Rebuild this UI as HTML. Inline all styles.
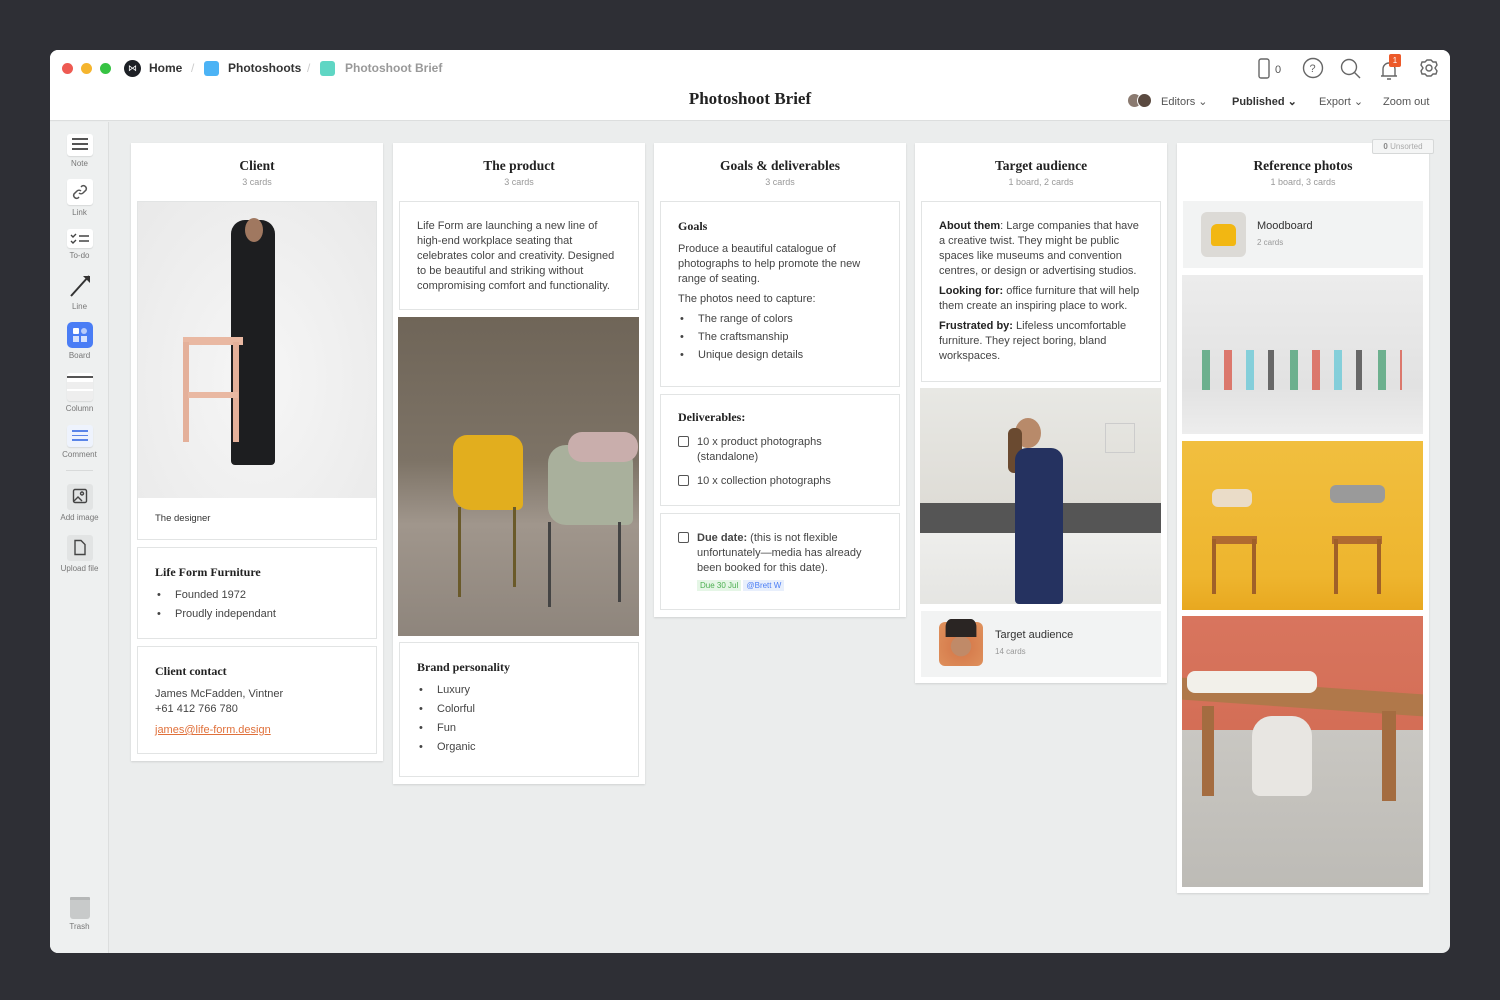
<!DOCTYPE html>
<html><head><meta charset="utf-8"><style>
*{box-sizing:border-box;margin:0;padding:0}
body{width:1500px;height:1000px;background:#2e2f35;font-family:"Liberation Sans",sans-serif;position:relative;overflow:hidden;color:#333}
.win{position:absolute;left:50px;top:50px;width:1400px;height:903px;background:#ebeded;border-radius:8px;overflow:hidden}
.hdr{position:absolute;left:0;top:0;width:1400px;height:71px;background:#fff;border-bottom:1px solid #dcdede}
.side{position:absolute;left:0;top:72px;width:59px;height:831px;background:#eef0f0;border-right:1px solid #dcdede}
.abs{position:absolute}
.dot{position:absolute;top:13px;width:11px;height:11px;border-radius:50%}
.crumb{position:absolute;top:11px;font-size:12px;font-weight:bold;color:#333}
.col{position:absolute;top:93px;width:252px;background:#fff;box-shadow:0 1px 2px rgba(0,0,0,.12)}
.ct{position:absolute;left:0;right:0;top:15px;text-align:center;font-family:"Liberation Serif",serif;font-weight:bold;font-size:13.5px;color:#222}
.cs{position:absolute;left:0;right:0;top:34px;text-align:center;font-size:9px;color:#999}
.card{position:absolute;left:6px;width:240px;background:#fff;border:1px solid #e2e4e4}
.t{font-size:11px;line-height:15px;color:#444}
.h{font-family:"Liberation Serif",serif;font-weight:bold;font-size:12px;color:#222}
.li{position:relative;padding-left:20px;font-size:11px;color:#444}
.li:before{content:"•";position:absolute;left:2px}
.sb{position:absolute;left:0;width:59px;text-align:center;font-size:8px;color:#777}
.ib{width:26px;height:22px;margin:0 auto 3px;background:#fff;border-radius:3px;box-shadow:0 1px 1px rgba(0,0,0,.1)}
.cb{display:inline-block;width:11px;height:11px;border:1px solid #555;border-radius:2px;vertical-align:-2px;margin-right:8px}
</style></head><body>
<div class="win">
 <div class="hdr">
  <div class="dot" style="left:12px;background:#ee5a52"></div>
  <div class="dot" style="left:31px;background:#f5b52e"></div>
  <div class="dot" style="left:50px;background:#37c343"></div>
  <div class="abs" style="left:74px;top:10px;width:17px;height:17px;border-radius:50%;background:#1d2025;color:#fff;font-size:9px;text-align:center;line-height:17px">⋈</div>
  <div class="crumb" style="left:99px">Home</div>
  <div class="crumb" style="left:141px;color:#ccc;font-weight:normal">/</div>
  <div class="abs" style="left:154px;top:11px;width:15px;height:15px;border-radius:3px;background:#4cb3f5"></div>
  <div class="crumb" style="left:178px">Photoshoots</div>
  <div class="crumb" style="left:257px;color:#ccc;font-weight:normal">/</div>
  <div class="abs" style="left:270px;top:11px;width:15px;height:15px;border-radius:3px;background:#5fd6c4"></div>
  <div class="crumb" style="left:295px;color:#999">Photoshoot Brief</div>
  <div class="abs" style="left:0;width:1400px;top:39px;text-align:center;font-family:'Liberation Serif',serif;font-weight:bold;font-size:17px;color:#222">Photoshoot Brief</div>
  <svg class="abs" style="left:1205px;top:7px" width="190" height="24" fill="none" stroke="#666" stroke-width="1.4">
   <rect x="4" y="2" width="10" height="19" rx="2"/><text x="20" y="16" font-size="11" fill="#555" stroke="none" font-family="Liberation Sans">0</text>
   <circle cx="58" cy="11" r="9.5"/><text x="54.5" y="15" font-size="11" fill="#666" stroke="none" font-family="Liberation Sans">?</text>
   <circle cx="94" cy="10" r="7.5"/><line x1="99.5" y1="15.5" x2="105" y2="21"/>
   <path d="M126 19h16M128 19v-7a6 6 0 0 1 12 0v7M132 22h4"/>
   <path d="M170 5l2 -2h4l2 2 3 0 1 3-2 3 2 3-1 3h-3l-2 2h-4l-2-2h-3l-1-3 2-3-2-3 1-3z"/><circle cx="174" cy="11" r="3"/>
  </svg>
  <div class="abs" style="left:1339px;top:4px;width:12px;height:13px;background:#ec5a2a;border-radius:2px;color:#fff;font-size:8px;text-align:center;line-height:13px">1</div>
  <div class="abs" style="left:1077px;top:43px;width:15px;height:15px;border-radius:50%;background:#8a7a70;border:1px solid #fff"></div>
  <div class="abs" style="left:1087px;top:43px;width:15px;height:15px;border-radius:50%;background:#5a4a40;border:1px solid #fff"></div>
  <div class="abs t" style="left:1111px;top:45px;font-size:11px;color:#555">Editors ⌄</div>
  <div class="abs t" style="left:1182px;top:45px;font-size:11px;color:#333;font-weight:bold">Published ⌄</div>
  <div class="abs t" style="left:1269px;top:45px;font-size:11px;color:#555">Export ⌄</div>
  <div class="abs t" style="left:1333px;top:45px;font-size:11px;color:#555">Zoom out</div>
 </div>
 <div class="side">
  <div class="sb" style="top:12px"><div class="ib" style="padding-top:4px"><div style="width:16px;height:2px;background:#555;margin:0 auto 3px"></div><div style="width:16px;height:2px;background:#555;margin:0 auto 3px"></div><div style="width:16px;height:2px;background:#555;margin:0 auto"></div></div>Note</div>
  <div class="sb" style="top:57px"><div class="ib" style="height:26px;padding-top:5px"><svg width="16" height="16" fill="none" stroke="#555" stroke-width="1.5"><path d="M7 9a3 3 0 0 0 4 0l3-3a3 3 0 0 0-4-4l-1 1"/><path d="M9 7a3 3 0 0 0-4 0l-3 3a3 3 0 0 0 4 4l1-1"/></svg></div>Link</div>
  <div class="sb" style="top:107px"><div class="ib" style="height:19px;padding-top:4px"><svg width="20" height="11" fill="none" stroke="#444" stroke-width="1.4"><path d="M1 2l2 2 3-3M1 8l2 2 3-3M9 3h10M9 8h10"/></svg></div>To-do</div>
  <div class="sb" style="top:150px"><svg width="26" height="28"><line x1="4" y1="24" x2="22" y2="4" stroke="#333" stroke-width="2"/><path d="M16 4h7v7z" fill="#333"/></svg><br>Line</div>
  <div class="sb" style="top:200px"><div style="width:26px;height:26px;margin:0 auto 3px;background:#4a7df5;border-radius:5px;position:relative"><div class="abs" style="left:6px;top:6px;width:6px;height:6px;background:#fff;border-radius:1px"></div><div class="abs" style="left:14px;top:6px;width:6px;height:6px;background:#b8cbfa;border-radius:50%"></div><div class="abs" style="left:6px;top:14px;width:6px;height:6px;background:#d7e2fd"></div><div class="abs" style="left:14px;top:14px;width:6px;height:6px;background:#d7e2fd"></div></div>Board</div>
  <div class="sb" style="top:251px"><div class="ib" style="height:28px;background:linear-gradient(#fff 0,#fff 3px,#555 3px,#555 5px,#fff 5px,#fff 9px,#eee 9px,#eee 16px,#fff 16px,#fff 18px,#eee 18px)"></div>Column</div>
  <div class="sb" style="top:303px"><div class="ib" style="background:#eef3fd;padding-top:5px"><div style="width:16px;height:1.5px;background:#5a85e8;margin:0 auto 3px"></div><div style="width:16px;height:1.5px;background:#5a85e8;margin:0 auto 3px"></div><div style="width:16px;height:1.5px;background:#5a85e8;margin:0 auto"></div></div>Comment</div>
  <div class="abs" style="left:16px;top:348px;width:27px;height:1px;background:#d8dada"></div>
  <div class="sb" style="top:362px"><div class="ib" style="background:#e2e4e4;box-shadow:none;height:26px;padding-top:4px"><svg width="16" height="16" fill="none" stroke="#444" stroke-width="1.4"><rect x="1.5" y="1.5" width="13" height="13" rx="1.5"/><circle cx="10" cy="5.5" r="1.5"/><path d="M2 13l4-4 4 4"/></svg></div>Add image</div>
  <div class="sb" style="top:413px"><div class="ib" style="background:#e2e4e4;box-shadow:none;height:26px;padding-top:4px"><svg width="14" height="17" fill="none" stroke="#444" stroke-width="1.4"><path d="M2 1.5h6l4 4v10h-10z"/></svg></div>Upload file</div>
  <div class="sb" style="top:775px"><div style="width:20px;height:22px;margin:0 auto 3px;background:#c8caca;border-radius:1px 1px 3px 3px;border-top:3px solid #b5b7b7"></div>Trash</div>
 </div>

 <!-- col1 -->
 <div class="col" style="left:81px;height:618px">
  <div class="ct">Client</div><div class="cs">3 cards</div>
  <div class="card" style="top:58px;height:339px">
   <div style="height:296px;background:radial-gradient(ellipse at 50% 60%,#f6f6f6,#e9e9e9);position:relative">
    <div class="abs" style="left:93px;top:18px;width:44px;height:245px;background:#1d1e20;border-radius:14px 14px 4px 4px"></div>
    <div class="abs" style="left:107px;top:16px;width:18px;height:24px;background:#a07860;border-radius:50%"></div>
    <div class="abs" style="left:45px;top:135px;width:60px;height:8px;background:#e9b8a2"></div>
    <div class="abs" style="left:45px;top:140px;width:6px;height:100px;background:#e4b09a"></div>
    <div class="abs" style="left:95px;top:140px;width:6px;height:100px;background:#e4b09a"></div>
    <div class="abs" style="left:50px;top:190px;width:50px;height:6px;background:#e9b8a2"></div>
   </div>
   <div class="t" style="padding:13px 17px;font-size:9.5px;color:#333">The designer</div>
  </div>
  <div class="card" style="top:404px;height:92px;padding:17px 17px">
   <div class="h">Life Form Furniture</div>
   <div class="li" style="margin-top:9px">Founded 1972</div>
   <div class="li" style="margin-top:7px">Proudly independant</div>
  </div>
  <div class="card" style="top:503px;height:108px;padding:17px 17px">
   <div class="h">Client contact</div>
   <div class="t" style="margin-top:8px">James McFadden, Vintner<br>+61 412 766 780</div>
   <div class="t" style="margin-top:6px;color:#e0703a;text-decoration:underline">james@life-form.design</div>
  </div>
 </div>

 <!-- col2 -->
 <div class="col" style="left:343px;height:641px">
  <div class="ct">The product</div><div class="cs">3 cards</div>
  <div class="card" style="top:58px;height:109px;padding:17px 20px 17px 17px">
   <div class="t">Life Form are launching a new line of high-end workplace seating that celebrates color and creativity. Designed to be beautiful and striking without compromising comfort and functionality.</div>
  </div>
  <div class="abs" style="left:5px;top:174px;width:241px;height:319px;background:linear-gradient(180deg,#6f6558 0%,#7d7366 45%,#a0968c 65%,#8e857c 100%);overflow:hidden">
   <div class="abs" style="left:55px;top:118px;width:70px;height:75px;background:#e2ae1e;border-radius:14px 14px 6px 18px"></div>
   <div class="abs" style="left:150px;top:128px;width:85px;height:80px;background:#a9b09c;border-radius:18px 18px 6px 18px"></div>
   <div class="abs" style="left:170px;top:115px;width:70px;height:30px;background:#c9aeac;border-radius:14px"></div>
   <div class="abs" style="left:60px;top:190px;width:3px;height:90px;background:#6a5a2a"></div>
   <div class="abs" style="left:115px;top:190px;width:3px;height:80px;background:#6a5a2a"></div>
   <div class="abs" style="left:150px;top:205px;width:3px;height:85px;background:#444"></div>
   <div class="abs" style="left:220px;top:205px;width:3px;height:80px;background:#444"></div>
  </div>
  <div class="card" style="top:499px;height:135px;padding:17px 17px">
   <div class="h">Brand personality</div>
   <div class="li" style="margin-top:9px">Luxury</div>
   <div class="li" style="margin-top:7px">Colorful</div>
   <div class="li" style="margin-top:7px">Fun</div>
   <div class="li" style="margin-top:7px">Organic</div>
  </div>
 </div>

 <!-- col3 -->
 <div class="col" style="left:604px;height:474px">
  <div class="ct">Goals &amp; deliverables</div><div class="cs">3 cards</div>
  <div class="card" style="top:58px;height:186px;padding:17px 28px 17px 17px">
   <div class="h">Goals</div>
   <div class="t" style="margin-top:8px">Produce a beautiful catalogue of photographs to help promote the new range of seating.</div>
   <div class="t" style="margin-top:5px">The photos need to capture:</div>
   <div class="li" style="margin-top:6px">The range of colors</div>
   <div class="li" style="margin-top:6px">The craftsmanship</div>
   <div class="li" style="margin-top:6px">Unique design details</div>
  </div>
  <div class="card" style="top:251px;height:112px;padding:15px 40px 15px 17px">
   <div class="h">Deliverables:</div>
   <div class="t" style="margin-top:10px;padding-left:19px;text-indent:-19px"><span class="cb"></span>10 x product photographs (standalone)</div>
   <div class="t" style="margin-top:9px;white-space:nowrap"><span class="cb"></span>10 x collection photographs</div>
  </div>
  <div class="card" style="top:370px;height:97px;padding:17px 30px 17px 17px">
   <div class="t" style="padding-left:19px;text-indent:-19px"><span class="cb"></span><b>Due date:</b> (this is not flexible unfortunately—media has already been booked for this date).</div>
   <div style="margin:5px 0 0 19px;font-size:8px"><span style="background:#e5f6e6;color:#4caf50;padding:1px 3px">Due 30 Jul</span> <span style="background:#e8effc;color:#4a7df5;padding:1px 3px">@Brett W</span></div>
  </div>
 </div>

 <!-- col4 -->
 <div class="col" style="left:865px;height:540px">
  <div class="ct">Target audience</div><div class="cs">1 board, 2 cards</div>
  <div class="card" style="top:58px;height:181px;padding:17px 20px 17px 17px">
   <div class="t"><b style="color:#222">About them</b>: Large companies that have a creative twist. They might be public spaces like museums and convention centres, or design or advertising studios.</div>
   <div class="t" style="margin-top:5px"><b style="color:#222">Looking for:</b> office furniture that will help them create an inspiring place to work.</div>
   <div class="t" style="margin-top:5px"><b style="color:#222">Frustrated by:</b> Lifeless uncomfortable furniture. They reject boring, bland workspaces.</div>
  </div>
  <div class="abs" style="left:5px;top:245px;width:241px;height:216px;background:linear-gradient(180deg,#e8e8e4 0%,#dedcd6 55%,#f0f0ee 60%,#e5e5e2 100%);overflow:hidden">
   <div class="abs" style="left:0;top:115px;width:241px;height:30px;background:#555"></div>
   <div class="abs" style="left:95px;top:30px;width:26px;height:30px;background:#b88a6a;border-radius:50%"></div>
   <div class="abs" style="left:88px;top:40px;width:14px;height:45px;background:#6a4a30;border-radius:6px"></div>
   <div class="abs" style="left:95px;top:60px;width:48px;height:156px;background:#253260;border-radius:12px 12px 4px 4px"></div>
   <div class="abs" style="left:185px;top:35px;width:30px;height:30px;border:1px solid #ccc"></div>
  </div>
  <div class="card" style="top:468px;height:66px;background:#f2f3f3;border:none">
   <div class="abs" style="left:18px;top:11px;width:44px;height:44px;border-radius:6px;background:radial-gradient(circle at 50% 55%,#c08a68 30%,#d77e4e 32%,#e0935e)"></div>
   <div class="abs" style="left:18px;top:8px;width:44px;height:18px;border-radius:8px 8px 0 0;background:#2a2523;transform:scaleX(.7)"></div>
   <div class="abs t" style="left:74px;top:17px;font-size:11px;color:#333">Target audience</div>
   <div class="abs" style="left:74px;top:36px;font-size:8px;color:#999">14 cards</div>
  </div>
 </div>

 <!-- col5 -->
 <div class="col" style="left:1127px;height:750px">
  <div class="ct">Reference photos</div><div class="cs">1 board, 3 cards</div>
  <div class="card" style="top:58px;height:67px;background:#f2f3f3;border:none">
   <div class="abs" style="left:18px;top:11px;width:45px;height:45px;border-radius:6px;background:#dcdad6"><div class="abs" style="left:10px;top:12px;width:25px;height:22px;background:#f2b712;border-radius:6px 6px 3px 3px"></div></div>
   <div class="abs t" style="left:74px;top:18px;font-size:11px;color:#333">Moodboard</div>
   <div class="abs" style="left:74px;top:37px;font-size:8px;color:#999">2 cards</div>
  </div>
  <div class="abs" style="left:5px;top:132px;width:241px;height:159px;background:linear-gradient(180deg,#ececec,#e2e2e2 70%,#ededed);overflow:hidden">
   <div class="abs" style="left:20px;top:75px;width:200px;height:40px;background:repeating-linear-gradient(90deg,#3a9a6a 0 8px,transparent 8px 22px,#d84a3a 22px 30px,transparent 30px 44px,#5cc6d6 44px 52px,transparent 52px 66px,#333 66px 72px,transparent 72px 88px);opacity:.7"></div>
  </div>
  <div class="abs" style="left:5px;top:298px;width:241px;height:169px;background:linear-gradient(180deg,#f1bf3f,#eeb52e 80%,#e8a820)">
   <div class="abs" style="left:30px;top:48px;width:40px;height:18px;background:#eadcc8;border-radius:6px"></div>
   <div class="abs" style="left:30px;top:95px;width:45px;height:8px;background:#b06a30"></div>
   <div class="abs" style="left:30px;top:98px;width:4px;height:55px;background:#a06028"></div>
   <div class="abs" style="left:70px;top:98px;width:4px;height:55px;background:#a06028"></div>
   <div class="abs" style="left:148px;top:44px;width:55px;height:18px;background:#9a9a9a;border-radius:6px"></div>
   <div class="abs" style="left:150px;top:95px;width:50px;height:8px;background:#b06a30"></div>
   <div class="abs" style="left:152px;top:98px;width:4px;height:55px;background:#a06028"></div>
   <div class="abs" style="left:195px;top:98px;width:4px;height:55px;background:#a06028"></div>
  </div>
  <div class="abs" style="left:5px;top:473px;width:241px;height:271px;background:linear-gradient(180deg,#d8755e 0%,#d46e56 42%,#c9c7c2 42%,#bdbbb6 100%);overflow:hidden">
   <div class="abs" style="left:0;top:70px;width:241px;height:22px;background:#b0784a;transform:skewY(4deg)"></div>
   <div class="abs" style="left:20px;top:90px;width:12px;height:90px;background:#a46c40"></div>
   <div class="abs" style="left:200px;top:95px;width:14px;height:90px;background:#a46c40"></div>
   <div class="abs" style="left:5px;top:55px;width:130px;height:22px;background:#f2f0ea;border-radius:8px"></div>
   <div class="abs" style="left:70px;top:100px;width:60px;height:80px;background:#e8e6e2;border-radius:20px 20px 8px 8px"></div>
  </div>
 </div>
 <div class="abs" style="left:1322px;top:89px;width:62px;height:15px;background:#f4f5f5;border:1px solid #d6d8d8;border-radius:2px;font-size:8px;color:#aaa;text-align:center;line-height:13px;z-index:5"><b style="color:#888">0</b> Unsorted</div>
</div>
</body></html>
